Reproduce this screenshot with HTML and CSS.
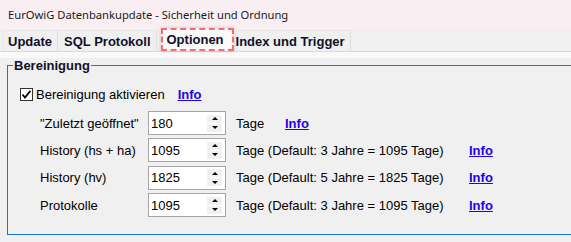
FILE: index.html
```html
<!DOCTYPE html>
<html>
<head>
<meta charset="utf-8">
<link rel="stylesheet" href="styles.css">
</head>
<body>
<div class="window">
  <div class="titlebar">EurOwiG Datenbankupdate - Sicherheit und Ordnung</div>
  <div class="tabs">
    <div class="tab tab-first">Update</div>
    <div class="tab">SQL Protokoll</div>
    <div class="tab tab-active">Optionen</div>
    <div class="tab tab-after">Index und Trigger</div>
  </div>
  <div class="tabband"></div>
  <div class="page">
    <fieldset class="group">
      <legend class="legend">Bereinigung</legend>
      <div class="check-row">
        <span class="checkbox">
          <svg width="11" height="11" viewBox="0 0 11 11"><path d="M1.5 5.5 L4 8.5 L9.5 1.8" fill="none" stroke="#000" stroke-width="1.8"/></svg>
        </span>
        <span class="check-label">Bereinigung aktivieren</span>
        <a class="info info-check">Info</a>
      </div>
      <div class="rows">
        <div class="row">
          <span class="row-label">"Zuletzt geöffnet"</span>
          <span class="spin"><span class="spin-value">180</span><span class="spin-btns"><span class="spin-btn"><span class="arrow-up"></span></span><span class="spin-btn"><span class="arrow-down"></span></span></span></span>
          <span class="unit unit-short">Tage</span>
          <a class="info">Info</a>
        </div>
        <div class="row">
          <span class="row-label">History (hs + ha)</span>
          <span class="spin"><span class="spin-value">1095</span><span class="spin-btns"><span class="spin-btn"><span class="arrow-up"></span></span><span class="spin-btn"><span class="arrow-down"></span></span></span></span>
          <span class="unit unit-long">Tage (Default: 3 Jahre = 1095 Tage)</span>
          <a class="info">Info</a>
        </div>
        <div class="row">
          <span class="row-label">History (hv)</span>
          <span class="spin"><span class="spin-value">1825</span><span class="spin-btns"><span class="spin-btn"><span class="arrow-up"></span></span><span class="spin-btn"><span class="arrow-down"></span></span></span></span>
          <span class="unit unit-long">Tage (Default: 5 Jahre = 1825 Tage)</span>
          <a class="info">Info</a>
        </div>
        <div class="row">
          <span class="row-label">Protokolle</span>
          <span class="spin"><span class="spin-value">1095</span><span class="spin-btns"><span class="spin-btn"><span class="arrow-up"></span></span><span class="spin-btn"><span class="arrow-down"></span></span></span></span>
          <span class="unit unit-long">Tage (Default: 3 Jahre = 1095 Tage)</span>
          <a class="info">Info</a>
        </div>
      </div>
    </fieldset>
  </div>
</div>
</body>
</html>
```
FILE: styles.css
```css
* { box-sizing: border-box; }
html, body { margin: 0; padding: 0; }
body {
  width: 571px;
  height: 242px;
  overflow: hidden;
  background: #f0f0f0;
  font-family: "Liberation Sans", Arial, sans-serif;
  font-size: 13px;
  color: #000;
}
.window { width: 571px; height: 242px; overflow: hidden; }
.titlebar {
  height: 29px;
  background: #f9eef2;
  padding-left: 8px;
  font-family: "Noto Sans", "Open Sans", sans-serif;
  font-size: 11.2px;
  line-height: 29px;
  color: #1a1a1a;
}
.tabs {
  height: 23px;
  display: flex;
  align-items: flex-end;
  padding-left: 3px;
  border-bottom: 1px solid #dadada;
  background: #f0f0f0;
}
.tab {
  height: 21px;
  padding: 0 5px 0 6px;
  font-weight: bold;
  font-size: 13px;
  line-height: 21px;
  color: #10102a;
  border-right: 1px solid #dedede;
  border-top: 1px solid #e8e8e8;
}
.tab-first { padding-left: 4px; border-left: 1px solid #e8e8e8; }
.tab-active {
  height: 23px;
  line-height: 19px;
  padding: 0 8px 0 4px;
  margin-left: 4px;
  background: #f9f9f9;
  border: 2px dashed rgba(236, 90, 90, 0.85);
  box-shadow: 0 0 3px rgba(200, 60, 60, 0.35);
}
.tab-after { padding-left: 2px; }
.tabband { height: 6px; background: #f9f9f9; }
.page { padding: 0 0 0 7px; }
.group {
  margin: 0 -30px 0 0;
  padding: 0 0 0 12px;
  height: 177px;
  border: 1px solid #1674d4;
  min-width: 0;
}
.legend {
  margin-left: -7px;
  padding: 0 1px;
  font-weight: bold;
  font-size: 13px;
  line-height: 15px;
  color: #10102a;
}
.check-row {
  display: flex;
  align-items: center;
  height: 16px;
  margin-top: 13px;
}
.checkbox {
  width: 13px;
  height: 13px;
  border: 1px solid #333;
  background: #fff;
  display: flex;
  align-items: center;
  justify-content: center;
}
.check-label { margin-left: 3px; }
.info {
  font-weight: bold;
  color: #2400f0;
  text-decoration: underline;
}
.info-check { margin-left: 13px; }
.rows {
  margin-top: 9px;
  padding-left: 20px;
  display: flex;
  flex-direction: column;
  gap: 3.4px;
}
.row {
  display: flex;
  align-items: center;
  height: 24px;
}
.row-label { width: 108px; }
.spin {
  width: 78px;
  height: 24px;
  border: 1px solid #a5a5a5;
  background: #fff;
  display: flex;
  align-items: center;
  justify-content: space-between;
  padding: 0 3px 0 2px;
}
.spin-value { color: #000; }
.spin-btns {
  display: flex;
  flex-direction: column;
  gap: 1px;
  width: 15px;
}
.spin-btn {
  height: 8px;
  background: #f0f0f0;
  display: flex;
  align-items: center;
  justify-content: center;
}
.arrow-up {
  width: 0; height: 0;
  border-left: 3px solid transparent;
  border-right: 3px solid transparent;
  border-bottom: 3px solid #000;
}
.arrow-down {
  width: 0; height: 0;
  border-left: 3px solid transparent;
  border-right: 3px solid transparent;
  border-top: 3px solid #000;
}
.unit { margin-left: 10px; }
.unit-short { width: 49px; }
.unit-long { width: 233px; }
```
